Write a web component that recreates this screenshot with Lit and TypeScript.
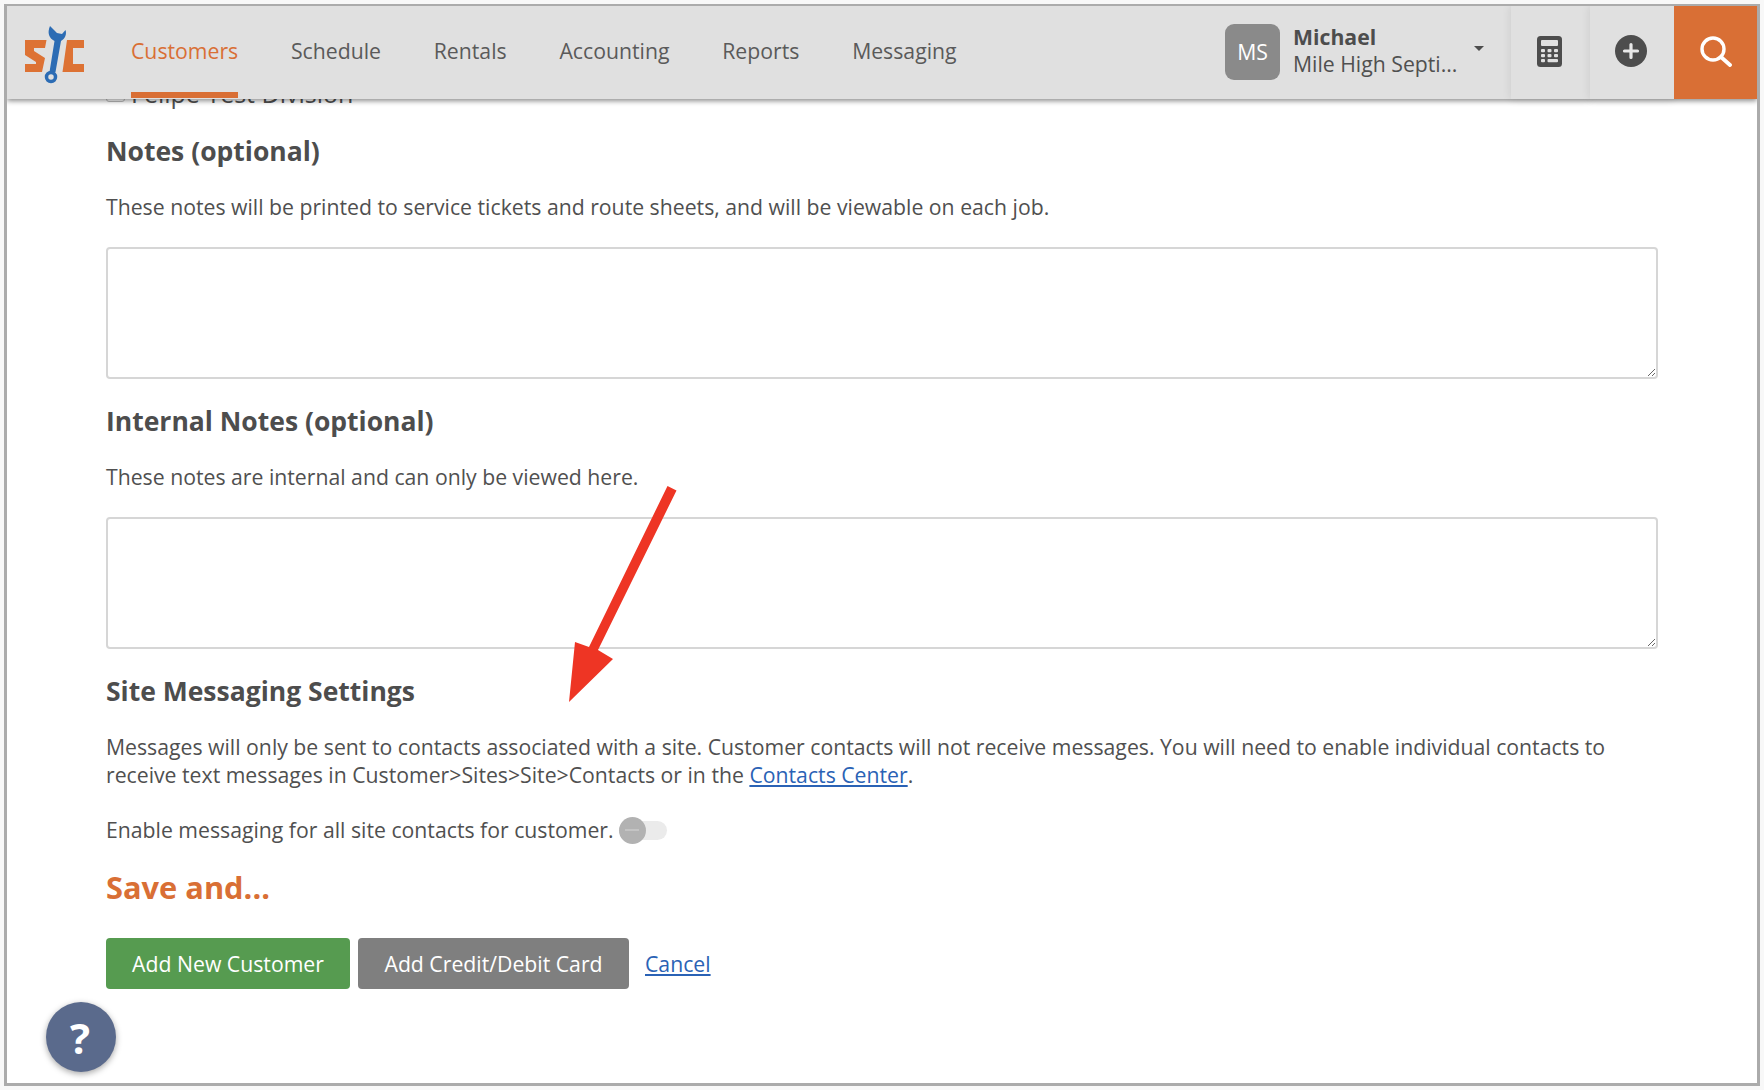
import { LitElement, html, css, svg } from "lit";
import { customElement } from "lit/decorators.js";

@customElement("app-root")
export class AppRoot extends LitElement {
  static styles = css`
    :host { display: block; width: 1764px; height: 1090px; background: #f8f8f8; overflow: hidden; font-family: "Open Sans", sans-serif; color: #505050; font-size: 21.23px; }
    .frame { position: relative; box-sizing: border-box; width: 1756px; height: 1082px; margin: 4px 0 0 4px; border: 3px solid #ababab; border-top-width: 2px; background: #fff; overflow: hidden; }
    .nav { position: absolute; z-index: 5; top: 0; left: 0; right: 0; height: 93px; display: flex; align-items: stretch; background: #e0e0e0; box-shadow: 0 2px 5px rgba(0,0,0,.45); }
    .logo { display: block; width: 124px; flex: none; }
    .links { display: flex; gap: 52.8px; align-items: stretch; }
    .link { display: flex; align-items: center; box-sizing: border-box; height: 92px; border-bottom: 6px solid transparent; padding-top: 2px; color: #5a5a5a; }
    .link.active { color: #d96f35; border-bottom-color: #d96f35; }
    .user { margin-left: auto; display: flex; align-items: center; align-self: stretch; }
    .avatar { width: 55px; height: 56px; margin-top: -1px; padding-bottom: 2px; box-sizing: border-box; border-radius: 9px; background: #8a8a8a; color: #fff; display: flex; align-items: center; justify-content: center; margin-right: 13px; }
    .who { display: flex; flex-direction: column; line-height: 27px; width: 181px; margin-top: -5px; }
    .who b { font-weight: 700; color: #4d4d4d; }
    .caret { width: 0; height: 0; border: 5.5px solid transparent; border-top: 5.5px solid #4d4d4d; border-bottom: 0; margin: -8px 27px 0 0; }
    .cell { width: 79px; box-sizing: border-box; padding: 0 3px 3px 0; align-self: stretch; display: flex; align-items: center; justify-content: center; box-shadow: 0 0 9px rgba(0,0,0,.1); background: #e0e0e0; }
    .cell.wide { width: 84px; }
    .cell.search { width: 83px; padding-right: 0; background: #d96f35; box-shadow: none; }
    .content { padding: 72.5px 99px 0 99px; }
    .felipe { display: flex; align-items: center; height: 28px; line-height: 28px; gap: 6px; font-size: 25px; }
    .box { width: 17px; height: 17px; border: 1.5px solid #bdbdbd; border-radius: 3px; flex: none; }
    h3 { margin: 27.5px 0 0; font-size: 26.5px; line-height: 34px; font-weight: 700; color: #4d4d4d; }
    p { margin: 25px 0 0; line-height: 28px; }
    textarea { display: block; box-sizing: border-box; width: 100%; height: 132px; margin-top: 26px; border: 2px solid #d6d6d6; border-radius: 4px; background: #fff; outline: none; }
    h3.next { margin-top: 25px; }
    a { color: #2a62b5; text-decoration: underline; }
    .toggle-row { display: flex; align-items: center; height: 28px; margin-top: 26px; gap: 5px; }
    .toggle { position: relative; top: 1px; width: 48px; height: 19px; background: #ebebeb; border-radius: 10px; flex: none; }
    .knob { position: absolute; left: 0; top: -4px; width: 27px; height: 27px; border-radius: 50%; background: #b2b2b2; display: flex; align-items: center; justify-content: center; }
    .knob i { display: block; width: 14px; height: 2px; background: #c4c4c4; }
    .save { margin: 24px 0 0; font-size: 30.8px; line-height: 40px; font-weight: 700; color: #d96f35; }
    .actions { display: flex; align-items: center; margin-top: 31px; }
    .btn { height: 51px; box-sizing: border-box; border-radius: 4px; color: #fff; display: flex; align-items: center; justify-content: center; padding-bottom: 1px; }
    .btn.green { width: 244px; background: #569b50; margin-right: 8px; }
    .btn.gray { width: 271px; background: #7f7f7f; margin-right: 16px; }
    .help { position: absolute; z-index: 6; left: 39px; bottom: 11px; width: 70px; height: 70px; padding-right: 2px; box-sizing: border-box; border-radius: 50%; background: #5a6a8c; box-shadow: 0 2px 6px rgba(0,0,0,.35); color: #fff; display: flex; align-items: center; justify-content: center; font-size: 42px; font-weight: 700; }
    .arrow { position: absolute; z-index: 4; left: 553px; top: 474px; }
  `;

  render() {
    const links = ["Customers", "Schedule", "Rentals", "Accounting", "Reports", "Messaging"];
    return html`
      <div class="frame">
        <div class="nav">
          <svg class="logo" width="124" height="93" viewBox="7 6 124 93">
            <path fill="#dd7234" d="M25 40H46.500L45 48H34V51L45 58L42 72H25V64H36V62L25 55Z"/>
            <path fill="#dd7234" d="M84 40H67L62.500 72H84V64H73V48H84Z"/>
            <path fill="#2c6cb4" d="M50 26C47 33 49 38 54.500 41L49.500 72H55.500L61 41C65 39 67 34 65.500 30L62 34L57 33L54 30Z"/>
            <circle cx="51" cy="77" r="4.500" fill="#e0e0e0" stroke="#2c6cb4" stroke-width="3.500"/>
          </svg>
          <div class="links">
            ${links.map((l, i) => html`<div class="link ${i === 0 ? "active" : ""}">${l}</div>`)}
          </div>
          <div class="user">
            <div class="avatar">MS</div>
            <div class="who"><b>Michael</b><span>Mile High Septi...</span></div>
            <div class="caret"></div>
            <div class="cell">
              <svg width="25" height="31" viewBox="0 0 25 31">
                <rect width="25" height="31" rx="3.500" fill="#4d4d4d"/>
                <rect x="4" y="4" width="17" height="6" rx="1" fill="#e0e0e0"/>
                ${[0, 1, 2].map((r) => [0, 1, 2].map((c) => r === 2 && c > 0 ? "" : svg`<rect x="${4 + c * 6.5}" y="${13 + r * 5}" width="4" height="3.2" rx="1" fill="#e0e0e0"/>`))}
                <rect x="10.500" y="23" width="10.500" height="3.200" rx="1" fill="#e0e0e0"/>
              </svg>
            </div>
            <div class="cell wide">
              <svg width="32" height="32" viewBox="0 0 32 32">
                <circle cx="16" cy="16" r="16" fill="#4d4d4d"/>
                <path d="M16 9.500V22.500M9.500 16H22.500" stroke="#e8e8e8" stroke-width="3.200" stroke-linecap="round"/>
              </svg>
            </div>
            <div class="cell search">
              <svg width="32" height="31" viewBox="0 0 32 31" fill="none" stroke="#fff" stroke-linecap="round">
                <circle cx="13" cy="13" r="11" stroke-width="3.400"/>
                <path d="M21 21L30 29" stroke-width="3.800"/>
              </svg>
            </div>
          </div>
        </div>
        <div class="content">
          <div class="felipe"><span class="box"></span><span>Felipe Test Division</span></div>
          <h3>Notes (optional)</h3>
          <p>These notes will be printed to service tickets and route sheets, and will be viewable on each job.</p>
          <textarea></textarea>
          <h3 class="next">Internal Notes (optional)</h3>
          <p>These notes are internal and can only be viewed here.</p>
          <textarea></textarea>
          <h3 class="next">Site Messaging Settings</h3>
          <p>Messages will only be sent to contacts associated with a site. Customer contacts will not receive messages. You will need to enable individual contacts to receive text messages in Customer&gt;Sites&gt;Site&gt;Contacts or in the <a href="#">Contacts Center</a>.</p>
          <div class="toggle-row"><span>Enable messaging for all site contacts for customer.</span><div class="toggle"><div class="knob"><i></i></div></div></div>
          <div class="save">Save and...</div>
          <div class="actions">
            <div class="btn green">Add New Customer</div>
            <div class="btn gray">Add Credit/Debit Card</div>
            <a href="#">Cancel</a>
          </div>
        </div>
        <svg class="arrow" width="120" height="230" viewBox="560 480 120 230">
          <path fill="#ee3524" d="M667.500 486L676.500 490.500L598 650L613 659L569 702L575 642L589 647Z"/>
        </svg>
        <div class="help">?</div>
      </div>
    `;
  }
}
